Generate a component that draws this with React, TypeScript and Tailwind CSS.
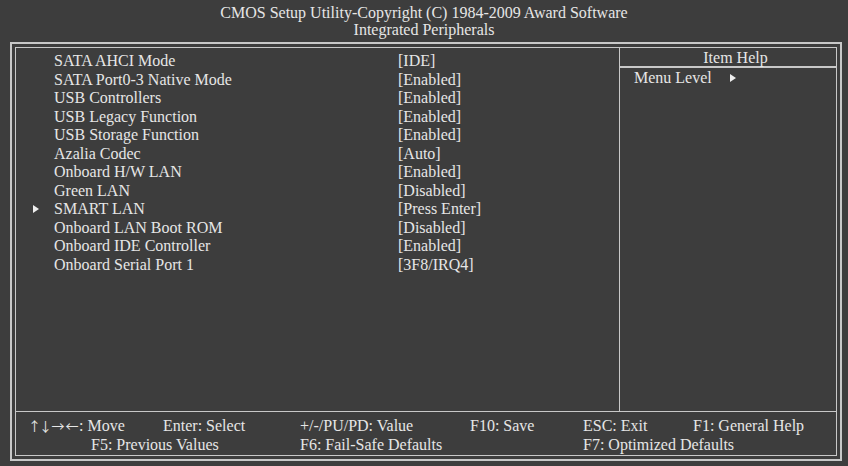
import React from 'react';

// ==================Data Menu====================
const items = [
    { label: 'SATA AHCI Mode', value: '[IDE]' },
    { label: 'SATA Port0-3 Native Mode', value: '[Enabled]' },
    { label: 'USB Controllers', value: '[Enabled]' },
    { label: 'USB Legacy Function', value: '[Enabled]' },
    { label: 'USB Storage Function', value: '[Enabled]' },
    { label: 'Azalia Codec', value: '[Auto]' },
    { label: 'Onboard H/W LAN', value: '[Enabled]' },
    { label: 'Green LAN', value: '[Disabled]' },
    { label: 'SMART LAN', value: '[Press Enter]', sub: true },
    { label: 'Onboard LAN Boot ROM', value: '[Disabled]' },
    { label: 'Onboard IDE Controller', value: '[Enabled]' },
    { label: 'Onboard Serial Port 1', value: '[3F8/IRQ4]' },
];

const Arrow: React.FC = () => (
    <span className="inline-block w-0 h-0 border-y-[4.5px] border-y-transparent border-l-[6px] border-l-[#eeeeee]" />
);

const arrowFont = { fontFamily: '"Noto Sans CJK SC", "DejaVu Sans", sans-serif' };

const App: React.FC = () => {
    return (
        <div
            className="w-[848px] h-[466px] bg-[#3d3d3d] text-[#e6e6e6] text-[16px] overflow-hidden"
            style={{ fontFamily: '"Liberation Serif", "Times New Roman", serif' }}
        >
            {/* ==================Judul==================== */}
            <div className="h-[42px] pt-[4px] text-center leading-[17px]">
                <div>CMOS Setup Utility-Copyright (C) 1984-2009 Award Software</div>
                <div>Integrated Peripherals</div>
            </div>

            {/* ==================Bingkai Ganda==================== */}
            <div className="ml-[10px] w-[832px] h-[419px] border-2 border-[#c8c8c8] p-[3px]">
                <div className="h-full border border-[#c8c8c8] flex flex-col">
                    <div className="flex h-[364px] border-b border-[#c8c8c8]">
                        {/* Daftar item */}
                        <div className="w-[604px] border-r border-[#c8c8c8] pt-[4px] leading-[18.5px]">
                            {items.map((item) => (
                                <div key={item.label} className="flex items-center h-[18.5px]">
                                    <div className="w-[38px] pl-[17px] flex items-center">
                                        {item.sub && <Arrow />}
                                    </div>
                                    <div className="w-[344px]">{item.label}</div>
                                    <div>{item.value}</div>
                                </div>
                            ))}
                        </div>
                        {/* Bantuan */}
                        <div className="flex-1 pt-[1px]">
                            <div className="h-[19px] border-b-2 border-[#c8c8c8] text-center pl-[15px] leading-[18px]">
                                Item Help
                            </div>
                            <div className="pl-[14px] flex items-center gap-[18px] h-[19px] leading-[18px]">
                                <span>Menu Level</span>
                                <Arrow />
                            </div>
                        </div>
                    </div>

                    {/* ==================Footer Tombol==================== */}
                    <div className="pt-[4px] leading-[19px]">
                        <div className="flex pl-[13px]">
                            <span className="w-[134px] flex items-center">
                                <span className="flex text-[13px] leading-[19px]" style={arrowFont}>
                                    <span className="w-[11px] flex justify-center">↑</span>
                                    <span className="w-[11px] flex justify-center">↓</span>
                                    <span className="w-[14px] flex justify-center">→</span>
                                    <span className="w-[14px] flex justify-center">←</span>
                                </span>
                                <span>: Move</span>
                            </span>
                            <span className="w-[137px]">Enter: Select</span>
                            <span className="w-[170px]">+/-/PU/PD: Value</span>
                            <span className="w-[113px]">F10: Save</span>
                            <span className="w-[110px]">ESC: Exit</span>
                            <span>F1: General Help</span>
                        </div>
                        <div className="flex pl-[75px]">
                            <span className="w-[209px]">F5: Previous Values</span>
                            <span className="w-[283px]">F6: Fail-Safe Defaults</span>
                            <span>F7: Optimized Defaults</span>
                        </div>
                    </div>
                </div>
            </div>
        </div>
    );
};

export default App;
